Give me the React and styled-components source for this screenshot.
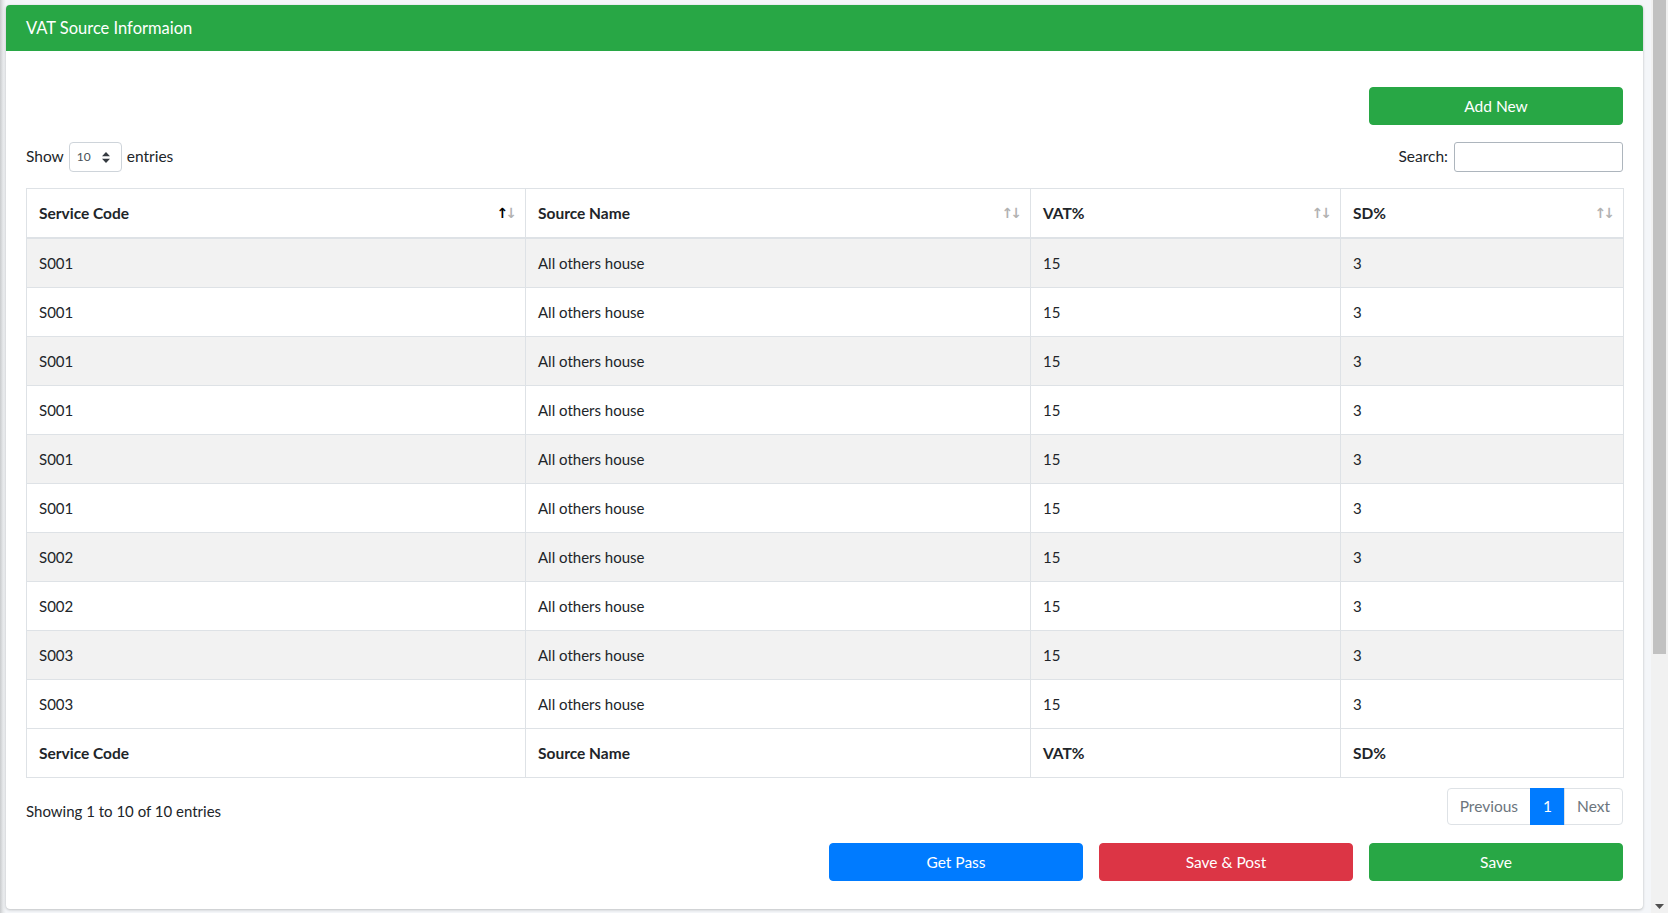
import styled, { createGlobalStyle } from "styled-components";

const GlobalStyle = createGlobalStyle`
    * { box-sizing: border-box; }
    body {
        margin: 0;
        background: #f4f6f9;
        font-family: Lato, "Open Sans", sans-serif;
        font-size: 16px;
        line-height: 1.5;
        color: #212529;
    }
`;

const rows = [
    ["S001", "All others house", "15", "3"],
    ["S001", "All others house", "15", "3"],
    ["S001", "All others house", "15", "3"],
    ["S001", "All others house", "15", "3"],
    ["S001", "All others house", "15", "3"],
    ["S001", "All others house", "15", "3"],
    ["S002", "All others house", "15", "3"],
    ["S002", "All others house", "15", "3"],
    ["S003", "All others house", "15", "3"],
    ["S003", "All others house", "15", "3"],
];

const columns = [
    { title: "Service Code", width: 499, active: true },
    { title: "Source Name", width: 505 },
    { title: "VAT%", width: 310 },
    { title: "SD%", width: 283 },
];

const SortArrows = ({ active }) => (
    <Arrows>
        <Arrow $on={active}>↑</Arrow>
        <Arrow>↓</Arrow>
    </Arrows>
);

const SelectArrows = () => (
    <svg width="8" height="11" viewBox="0 0 8 11">
        <path d="M4 0 L8 4.2 L0 4.2 Z M4 11 L8 6.8 L0 6.8 Z" fill="#343a40" />
    </svg>
);

const App = () => {
    return (
        <Page>
            <GlobalStyle />
            <Card>
                <CardHeader>VAT Source Informaion</CardHeader>
                <CardBody>
                    <TopRow>
                        <Button $color="#28a745">Add New</Button>
                    </TopRow>

                    <Controls>
                        <Label>
                            Show
                            <Select>
                                <span>10</span>
                                <SelectArrows />
                            </Select>
                            entries
                        </Label>
                        <Label>
                            Search:
                            <SearchInput type="text" />
                        </Label>
                    </Controls>

                    <Table>
                        <thead>
                            <tr>
                                {columns.map((c) => (
                                    <Th key={c.title} $w={c.width}>
                                        <HeadInner>
                                            {c.title}
                                            <SortArrows active={c.active} />
                                        </HeadInner>
                                    </Th>
                                ))}
                            </tr>
                        </thead>
                        <tbody>
                            {rows.map((r, i) => (
                                <Tr key={i} $odd={i % 2 === 0}>
                                    {r.map((v, j) => <Td key={j}>{v}</Td>)}
                                </Tr>
                            ))}
                        </tbody>
                        <tfoot>
                            <tr>
                                {columns.map((c) => <Tf key={c.title}>{c.title}</Tf>)}
                            </tr>
                        </tfoot>
                    </Table>

                    <InfoRow>
                        <Info>Showing 1 to 10 of 10 entries</Info>
                        <Pagination>
                            <PageItem $pos="first">Previous</PageItem>
                            <PageItem $active>1</PageItem>
                            <PageItem $pos="last">Next</PageItem>
                        </Pagination>
                    </InfoRow>

                    <ActionRow>
                        <Button $color="#007bff">Get Pass</Button>
                        <Button $color="#dc3545">Save &amp; Post</Button>
                        <Button $color="#28a745">Save</Button>
                    </ActionRow>
                </CardBody>
            </Card>

            {/* browser scrollbar as seen in the screenshot */}
            <ScrollTrack>
                <ScrollThumb />
                <svg width="9" height="5" viewBox="0 0 9 5">
                    <path d="M0 0 L9 0 L4.5 5 Z" fill="#505050" />
                </svg>
            </ScrollTrack>
        </Page>
    );
};

const Page = styled.div`
    min-height: 100vh;
    padding: 5px 25px 0 6px;
    background: linear-gradient(to right, #c9cbcd 0, #e6e8ea 3px, #f4f6f9 6px);
`;

const Card = styled.section`
    background: #fff;
    border-radius: 4px;
    box-shadow: 0 0 1px rgba(0, 0, 0, .125), 0 1px 3px rgba(0, 0, 0, .2);
`;

const CardHeader = styled.header`
    background: #28a745;
    color: #fff;
    height: 46px;
    padding: 0 20px;
    display: flex;
    align-items: center;
    font-size: 16.5px;
    border-radius: 4px 4px 0 0;
`;

const CardBody = styled.div`
    padding: 36px 20px 28px;
`;

const TopRow = styled.div`
    display: flex;
    justify-content: flex-end;
`;

const Button = styled.button`
    width: 254px;
    height: 38px;
    border: 1px solid ${(p) => p.$color};
    background: ${(p) => p.$color};
    color: #fff;
    font-family: inherit;
    font-size: 15.5px;
    border-radius: 4px;
    cursor: pointer;
`;

const Controls = styled.div`
    display: flex;
    justify-content: space-between;
    align-items: center;
    margin-top: 17px;
    height: 30px;
`;

const Label = styled.label`
    display: flex;
    align-items: center;
    gap: 5px;
    font-size: 15.5px;
    color: #212529;
`;

const Select = styled.div`
    width: 53px;
    height: 30px;
    border: 1px solid #ced4da;
    border-radius: 4px;
    display: flex;
    align-items: center;
    justify-content: space-between;
    padding: 0 11px 0 7px;
    font-size: 12px;
    color: #495057;
`;

const SearchInput = styled.input`
    width: 169px;
    height: 30px;
    border: 1px solid #adb5bd;
    border-radius: 3px;
    margin-left: 1px;
`;

const Table = styled.table`
    width: 100%;
    margin-top: 16px;
    border-collapse: collapse;
    border: 1px solid #dee2e6;
    table-layout: fixed;
`;

const Th = styled.th`
    width: ${(p) => p.$w}px;
    padding: 12px 8px 12px 12px;
    line-height: 24px;
    text-align: left;
    font-size: 15.5px;
    font-weight: 700;
    border: 1px solid #dee2e6;
    border-bottom: 2px solid #dee2e6;
`;

const HeadInner = styled.div`
    display: flex;
    justify-content: space-between;
    align-items: center;
`;

const Arrows = styled.span`
    display: flex;
    font-family: "DejaVu Sans", sans-serif;
    font-size: 14px;
    font-weight: 700;
    letter-spacing: -3px;
    padding-right: 3px;
`;

const Arrow = styled.span`
    opacity: ${(p) => (p.$on ? 1 : 0.3)};
    color: #000;
`;

const Tr = styled.tr`
    background: ${(p) => (p.$odd ? "#f2f2f2" : "#fff")};
`;

const Td = styled.td`
    padding: 12px;
    line-height: 24px;
    border: 1px solid #dee2e6;
    font-size: 15px;
    color: #212529;
`;

const Tf = styled.th`
    padding: 12px;
    line-height: 24px;
    text-align: left;
    font-size: 15.5px;
    font-weight: 700;
    border: 1px solid #dee2e6;
`;

const InfoRow = styled.div`
    display: flex;
    justify-content: space-between;
    align-items: flex-start;
    margin-top: 10px;
`;

const Info = styled.div`
    padding-top: 12px;
    font-size: 15px;
`;

const Pagination = styled.ul`
    display: flex;
    list-style: none;
    margin: 0;
    padding: 0;
`;

const PageItem = styled.li`
    padding: 7px 12px;
    line-height: 21px;
    font-size: 15.5px;
    border: 1px solid ${(p) => (p.$active ? "#007bff" : "#dee2e6")};
    margin-left: -1px;
    background: ${(p) => (p.$active ? "#007bff" : "#fff")};
    color: ${(p) => (p.$active ? "#fff" : "#6c757d")};
    border-radius: ${(p) => (p.$pos === "first" ? "4px 0 0 4px" : p.$pos === "last" ? "0 4px 4px 0" : "0")};
`;

const ActionRow = styled.div`
    display: flex;
    justify-content: flex-end;
    gap: 16px;
    margin-top: 18px;
`;

const ScrollTrack = styled.div`
    position: fixed;
    top: 0;
    right: 0;
    width: 17px;
    height: 100vh;
    background: #f1f1f1;
    display: flex;
    flex-direction: column;
    align-items: center;
    justify-content: space-between;
    padding: 0 2px 4px;
`;

const ScrollThumb = styled.div`
    width: 13px;
    height: 654px;
    background: #c1c1c1;
`;

export default App;
